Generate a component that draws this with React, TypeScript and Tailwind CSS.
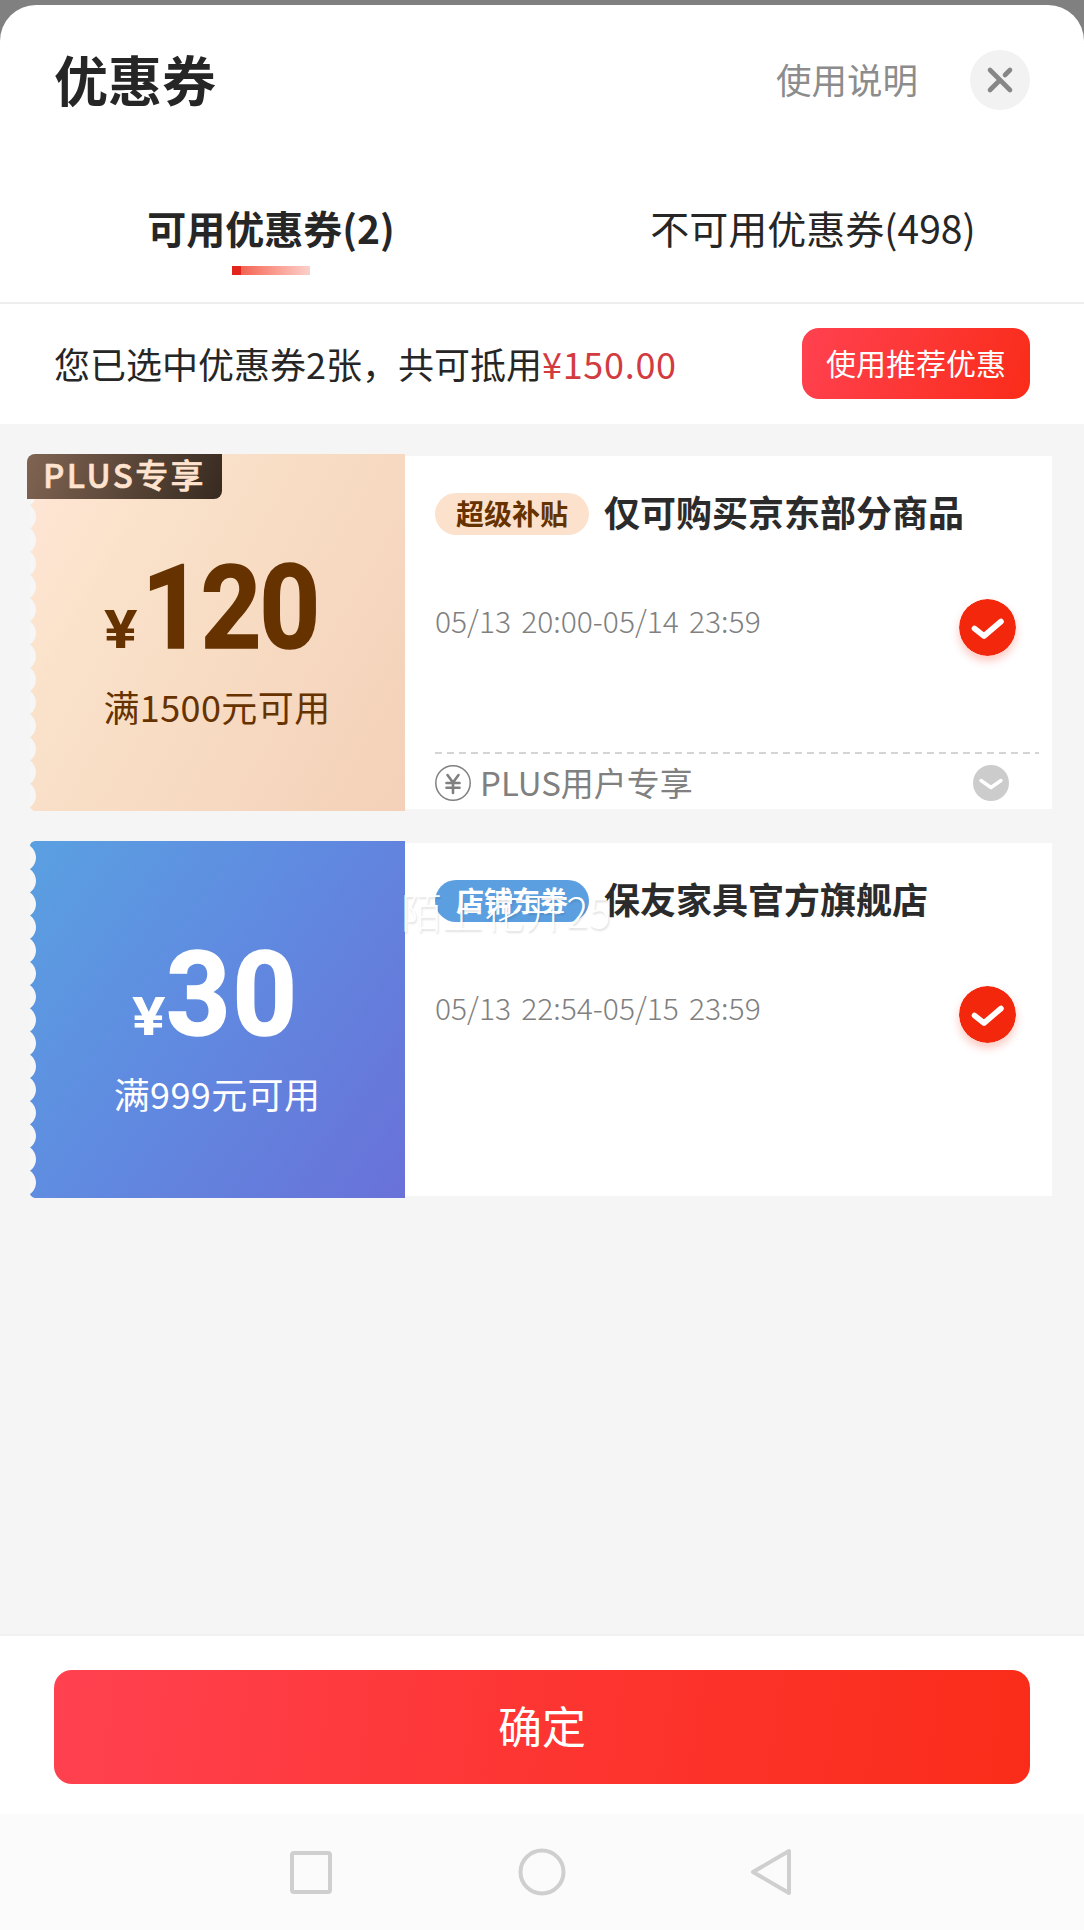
import clsx from "clsx";

interface Coupon {
  theme: "gold" | "blue";
  badge?: string;
  amount: string;
  limit: string;
  tag: string;
  title: string;
  period: string;
  note?: string;
}

const coupons: Coupon[] = [
  {
    theme: "gold",
    badge: "PLUS专享",
    amount: "120",
    limit: "满1500元可用",
    tag: "超级补贴",
    title: "仅可购买京东部分商品",
    period: "05/13 20:00-05/14 23:59",
    note: "PLUS用户专享",
  },
  {
    theme: "blue",
    amount: "30",
    limit: "满999元可用",
    tag: "店铺东券",
    title: "保友家具官方旗舰店",
    period: "05/13 22:54-05/15 23:59",
  },
];

function CloseIcon() {
  return (
    <svg width="60" height="60" viewBox="0 0 60 60" fill="none">
      <circle cx="30" cy="30" r="30" fill="#f2f2f2" />
      <path d="M20 20L40 40M20 40L29 31M35 25L40 20" stroke="#868686" strokeWidth="4.6" strokeLinecap="round" />
    </svg>
  );
}

function CheckIcon() {
  return (
    <svg width="57" height="57" viewBox="0 0 57 57" fill="none" className="rounded-full shadow-[0_5px_9px_rgba(242,39,12,0.25)]">
      <circle cx="28.5" cy="28.5" r="28.5" fill="#f2270c" />
      <path d="M15.5 29.5L25 37L42 22.5" stroke="#fff" strokeWidth="5.6" strokeLinecap="round" strokeLinejoin="round" />
    </svg>
  );
}

function YenIcon() {
  return (
    <svg width="36" height="36" viewBox="0 0 36 36" fill="none" stroke="#808080">
      <circle cx="18" cy="18" r="17.2" strokeWidth="1.5" />
      <path d="M12.5 10L18 17.5L23.5 10M18 17.5V28M11.5 18H24.5M11.5 22.7H24.5" strokeWidth="2.6" strokeLinecap="round" />
    </svg>
  );
}

function ExpandIcon() {
  return (
    <svg width="36" height="36" viewBox="0 0 36 36" fill="none">
      <circle cx="18" cy="18" r="18" fill="#ccc" />
      <path d="M8 15.5L18 22.5L28 15.5" stroke="#fff" strokeWidth="3.4" strokeLinecap="round" strokeLinejoin="round" />
    </svg>
  );
}

// scalloped edge, 15 bites down the left side of the ticket
function Teeth() {
  let d = "M0 0H5Q0 1 0 5";
  for (let i = 0; i < 15; i++) {
    d += "c1.5 1 6 5 6 11.6s-4.5 10.6-6 11.6";
  }
  d += "Q1 356 5 357H0Z";
  return (
    <svg width="7" height="357" viewBox="0 0 7 357" className="absolute left-0 top-0">
      <path d={d} fill="#f6f6f6" />
    </svg>
  );
}

function CouponCard({ coupon }: { coupon: Coupon }) {
  const gold = coupon.theme === "gold";
  return (
    <div className="flex h-[357px] items-center">
      <div
        className={clsx(
          "relative flex h-full w-[375px] shrink-0 flex-col items-center",
          gold
            ? "bg-[linear-gradient(120deg,#ffe6d7_0%,#fae2ca_25%,#f8dcc4_50%,#f4d0b8_100%)] text-[#663300]"
            : "bg-[linear-gradient(125deg,#5aa0e1_0%,#6089e0_48%,#6971d8_100%)] text-white",
        )}
      >
        <Teeth />
        {coupon.badge && (
          <div className="absolute -left-[3px] top-0 flex h-[45px] w-[195px] items-center justify-center rounded-tl-lg rounded-br-lg bg-[linear-gradient(110deg,#806452,#372a20)] pb-[3px] text-[33px] font-medium tracking-[2.4px] text-[#ffe3cf] [-webkit-text-stroke:0.6px_#ffe3cf]">
            {coupon.badge}
          </div>
        )}
        <div className="mt-[96px] flex w-full items-baseline pl-[74px] font-[Roboto,sans-serif] font-bold leading-[116px]">
          <span className={clsx("w-[30px] origin-left scale-x-[1.18] text-[53px]", gold ? "" : "ml-[28px]")}>¥</span>
          <span
            className={clsx(
              "origin-left text-[116px] [-webkit-text-stroke:1.6px_currentColor]",
              gold ? "ml-2 scale-x-[0.91] tracking-[-2px]" : "ml-1 scale-x-[0.97] tracking-[2px]",
            )}
          >
            {coupon.amount}
          </span>
        </div>
        <div className="-mt-[8px] pr-px text-4xl leading-[52px] tracking-[0.4px]">{coupon.limit}</div>
      </div>
      <div className="flex h-[353px] flex-1 flex-col bg-white pl-[30px]">
        <div className="mt-[31px] flex h-[54px] items-center">
          <span
            className={clsx(
              "flex h-[42px] w-[154px] items-center justify-center rounded-full pb-[3px] text-[28px] font-bold",
              gold ? "bg-[#fce2cc] text-[#663300]" : "bg-[#5c9fe0] text-white",
            )}
          >
            {coupon.tag}
          </span>
          <span className="ml-[15px] pb-1.5 text-4xl font-bold text-[#2b2b2b]">{coupon.title}</span>
        </div>
        <div className="mt-[58px] flex h-[57px] items-center justify-between pr-9">
          <span className="pb-3.5 text-[30px] font-light text-[#808080] [word-spacing:3.5px]">{coupon.period}</span>
          <CheckIcon />
        </div>
        {coupon.note && (
          <div className="mt-auto flex h-[57px] flex-col pr-[13px]">
            <div className="h-0.5 shrink-0 bg-[repeating-linear-gradient(90deg,#d4d4d4_0_7px,transparent_7px_12px)]" />
            <div className="flex flex-1 items-center pr-[30px] pt-0.5">
              <YenIcon />
              <span className="ml-[9px] flex-1 text-[33px] text-[#808080]">{coupon.note}</span>
              <ExpandIcon />
            </div>
          </div>
        )}
      </div>
    </div>
  );
}

export default function App() {
  return (
    <div className="h-[1930px] w-[1084px] overflow-hidden bg-[#808080] pt-[5px] font-['Noto_Sans_CJK_SC',sans-serif] text-[#262626]">
      <div className="flex h-[1925px] flex-col rounded-t-[36px] bg-white">
        <header className="flex h-[150px] items-center px-[54px]">
          <h1 className="flex-1 pb-[3px] text-[54px] font-bold">优惠券</h1>
          <span className="mr-[52px] pb-[3px] text-[35.5px] text-[#8c8c8c]">使用说明</span>
          <button>
            <CloseIcon />
          </button>
        </header>

        <nav className="flex h-[149px] border-b-2 border-[#eee] text-[39px] leading-[56px]">
          <div className="flex flex-1 flex-col items-center pt-11">
            <span className="font-bold">可用优惠券(2)</span>
            <div className="mt-[11px] flex h-[9px] w-[78px]">
              <div className="w-[9px] bg-[#e1251b]" />
              <div className="flex-1 bg-linear-to-r from-[#f26253] to-[#fad0cb]" />
            </div>
          </div>
          <div className="flex flex-1 justify-center pt-11">不可用优惠券(498)</div>
        </nav>

        <div className="flex h-[120px] items-center justify-between px-[54px] pb-0.5">
          <p className="pb-px text-4xl">
            您已选中优惠券2张，共可抵用<span className="tracking-[0.7px] text-[#d23b3f]">¥150.00</span>
          </p>
          <button className="h-[71px] w-[228px] rounded-[17px] bg-[linear-gradient(110deg,#ff4150,#fa2c19)] pb-[3px] text-3xl text-white">
            使用推荐优惠
          </button>
        </div>

        <main className="relative flex flex-1 flex-col gap-[30px] border-b-2 border-[#f0f0f0] bg-[#f5f5f5] pl-[30px] pr-8 pt-[30px]">
          {coupons.map((coupon) => (
            <CouponCard key={coupon.title} coupon={coupon} />
          ))}
          <span className="absolute left-[401px] top-[456px] text-[41px] font-light leading-[60px] tracking-[0.3px] text-white [text-shadow:1px_2px_2px_rgba(0,0,0,0.12)]">
            陌上花开25
          </span>
        </main>

        <footer className="flex h-[178px] justify-center bg-white pt-[34px]">
          <button className="h-[114px] w-[976px] rounded-[18px] bg-[linear-gradient(98deg,#ff4150,#fd3532_50%,#fa2c19)] pb-1 text-[44px] text-white">
            确定
          </button>
        </footer>

        <div className="flex h-[116px] items-center justify-center bg-[#fbfbfb]">
          <svg width="504" height="48" viewBox="0 0 504 48" fill="none" stroke="#cfcfcf" strokeWidth="4" strokeLinejoin="round">
            <rect x="2" y="5" width="38" height="39" rx="2" />
            <circle cx="252" cy="24" r="21.5" />
            <path d="M463 24L499 3V45Z" />
          </svg>
        </div>
      </div>
    </div>
  );
}
